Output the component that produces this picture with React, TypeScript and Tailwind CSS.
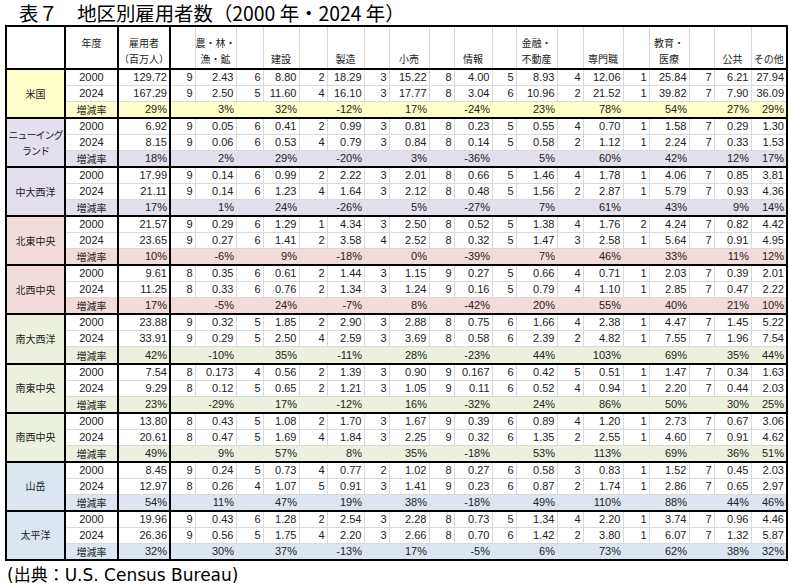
import type { ReactNode } from 'react'

interface Region {
  name: ReactNode
  bg: string
  y2000: string
  y2024: string
  growth: string
}

const regions: Region[] = [
  {
    name: '米国',
    bg: 'bg-[#ffffcc]',
    y2000: '129.72 9 2.43 6 8.80 2 18.29 3 15.22 8 4.00 5 8.93 4 12.06 1 25.84 7 6.21 27.94',
    y2024: '167.29 9 2.50 5 11.60 4 16.10 3 17.77 8 3.04 6 10.96 2 21.52 1 39.82 7 7.90 36.09',
    growth: '29% 3% 32% -12% 17% -24% 23% 78% 54% 27% 29%',
  },
  {
    name: (
      <span className="tracking-[-1px]">
        ニューイング
        <br />
        ランド
      </span>
    ),
    bg: 'bg-[#e4dfec]',
    y2000: '6.92 9 0.05 6 0.41 2 0.99 3 0.81 8 0.23 5 0.55 4 0.70 1 1.58 7 0.29 1.30',
    y2024: '8.15 9 0.06 6 0.53 4 0.79 3 0.84 8 0.14 5 0.58 2 1.12 1 2.24 7 0.33 1.53',
    growth: '18% 2% 29% -20% 3% -36% 5% 60% 42% 12% 17%',
  },
  {
    name: '中大西洋',
    bg: 'bg-[#e4dfec]',
    y2000: '17.99 9 0.14 6 0.99 2 2.22 3 2.01 8 0.66 5 1.46 4 1.78 1 4.06 7 0.85 3.81',
    y2024: '21.11 9 0.14 6 1.23 4 1.64 3 2.12 8 0.48 5 1.56 2 2.87 1 5.79 7 0.93 4.36',
    growth: '17% 1% 24% -26% 5% -27% 7% 61% 43% 9% 14%',
  },
  {
    name: '北東中央',
    bg: 'bg-[#f2dcdb]',
    y2000: '21.57 9 0.29 6 1.29 1 4.34 3 2.50 8 0.52 5 1.38 4 1.76 2 4.24 7 0.82 4.42',
    y2024: '23.65 9 0.27 6 1.41 2 3.58 4 2.52 8 0.32 5 1.47 3 2.58 1 5.64 7 0.91 4.95',
    growth: '10% -6% 9% -18% 0% -39% 7% 46% 33% 11% 12%',
  },
  {
    name: '北西中央',
    bg: 'bg-[#f2dcdb]',
    y2000: '9.61 8 0.35 6 0.61 2 1.44 3 1.15 9 0.27 5 0.66 4 0.71 1 2.03 7 0.39 2.01',
    y2024: '11.25 8 0.33 6 0.76 2 1.34 3 1.24 9 0.16 5 0.79 4 1.10 1 2.85 7 0.47 2.22',
    growth: '17% -5% 24% -7% 8% -42% 20% 55% 40% 21% 10%',
  },
  {
    name: '南大西洋',
    bg: 'bg-[#ebf1de]',
    y2000: '23.88 9 0.32 5 1.85 2 2.90 3 2.88 8 0.75 6 1.66 4 2.38 1 4.47 7 1.45 5.22',
    y2024: '33.91 9 0.29 5 2.50 4 2.59 3 3.69 8 0.58 6 2.39 2 4.82 1 7.55 7 1.96 7.54',
    growth: '42% -10% 35% -11% 28% -23% 44% 103% 69% 35% 44%',
  },
  {
    name: '南東中央',
    bg: 'bg-[#ebf1de]',
    y2000: '7.54 8 0.173 4 0.56 2 1.39 3 0.90 9 0.167 6 0.42 5 0.51 1 1.47 7 0.34 1.63',
    y2024: '9.29 8 0.12 5 0.65 2 1.21 3 1.05 9 0.11 6 0.52 4 0.94 1 2.20 7 0.44 2.03',
    growth: '23% -29% 17% -12% 16% -32% 24% 86% 50% 30% 25%',
  },
  {
    name: '南西中央',
    bg: 'bg-[#ebf1de]',
    y2000: '13.80 8 0.43 5 1.08 2 1.70 3 1.67 9 0.39 6 0.89 4 1.20 1 2.73 7 0.67 3.06',
    y2024: '20.61 8 0.47 5 1.69 4 1.84 3 2.25 9 0.32 6 1.35 2 2.55 1 4.60 7 0.91 4.62',
    growth: '49% 9% 57% 8% 35% -18% 53% 113% 69% 36% 51%',
  },
  {
    name: '山岳',
    bg: 'bg-[#dce6f1]',
    y2000: '8.45 9 0.24 5 0.73 4 0.77 2 1.02 8 0.27 6 0.58 3 0.83 1 1.52 7 0.45 2.03',
    y2024: '12.97 8 0.26 4 1.07 5 0.91 3 1.41 9 0.23 6 0.87 2 1.74 1 2.86 7 0.65 2.97',
    growth: '54% 11% 47% 19% 38% -18% 49% 110% 88% 44% 46%',
  },
  {
    name: '太平洋',
    bg: 'bg-[#dce6f1]',
    y2000: '19.96 9 0.43 6 1.28 2 2.54 3 2.28 8 0.73 5 1.34 4 2.20 1 3.74 7 0.96 4.46',
    y2024: '26.36 9 0.56 5 1.75 4 2.20 3 2.66 8 0.70 6 1.42 2 3.80 1 6.07 7 1.32 5.87',
    growth: '32% 30% 37% -13% 17% -5% 6% 73% 62% 38% 32%',
  },
]

const sectors: ReactNode[] = [
  <>農・林・<br />漁・鉱</>,
  '建設',
  '製造',
  '小売',
  '情報',
  <>金融・<br />不動産</>,
  '専門職',
  <>教育・<br />医療</>,
  '公共',
]

// rank / value column pairs, px
const pairWidths = [
  [25, 41],
  [27, 36],
  [28, 37],
  [25, 40],
  [25, 38],
  [24, 41],
  [26, 40],
  [26, 40],
  [25, 37],
]

const jp = "font-['Noto_Sans_CJK_JP',sans-serif] text-[10px]"
const num = "font-['Liberation_Sans_Narrow','Liberation_Sans',sans-serif] text-[11px]"
const thin = 'border-[#d9d9d9]'
const head = `${jp} font-normal align-bottom leading-[16px] whitespace-nowrap border-b-2 border-b-black`

function RowCells({ label, values }: { label: string; values: string }) {
  const v = values.split(' ')
  return (
    <>
      <td className={`${num} bg-white text-center border-r-2 border-r-black border-b ${thin} leading-[15px]`}>{label}</td>
      <td className={`${num} bg-white text-right pr-[2px] border-r-2 border-r-black border-b ${thin} leading-[15px]`}>{v[0]}</td>
      {v.slice(1).map((x, i) => (
        <td
          key={i}
          className={`${num} bg-white text-right pr-[2px] border-b ${thin} leading-[15px] ${
            i === v.length - 2 ? 'border-r-2 border-r-black' : `border-r ${thin}`
          }`}
        >
          {x}
        </td>
      ))}
    </>
  )
}

function GrowthRow({ bg, values }: { bg: string; values: string }) {
  const g = values.split(' ')
  return (
    <tr className={`h-[16.6px] ${bg}`}>
      <td className={`${jp} text-center border-r-2 border-r-black border-b-2 border-b-black leading-[15px]`}>増減率</td>
      <td className={`${num} text-right pr-[2px] border-r-2 border-r-black border-b-2 border-b-black leading-[15px]`}>{g[0]}</td>
      {g.slice(1, 10).map((x, i) => (
        <td key={i} colSpan={2} className={`${num} text-right pr-[2px] border-b-2 border-b-black leading-[15px]`}>
          {x}
        </td>
      ))}
      <td className={`${num} text-right pr-[2px] border-r-2 border-r-black border-b-2 border-b-black leading-[15px]`}>{g[10]}</td>
    </tr>
  )
}

export default function App() {
  return (
    <div className="w-[789px] min-h-[587px] bg-white text-[#222]">
      <h1 className="pl-[19px] font-['Noto_Sans_CJK_JP',sans-serif] text-[19.4px] font-normal leading-[25px] text-black whitespace-nowrap">
        表７　地区別雇用者数（2000 年・2024 年）
      </h1>
      <div className="pl-[5px]">
        <table className="table-fixed border-collapse w-[781px] border-2 border-black">
          <colgroup>
            <col className="w-[59px]" />
            <col className="w-[53px]" />
            <col className="w-[52px]" />
            {pairWidths.map(([r, v], i) => [
              <col key={`r${i}`} style={{ width: r }} />,
              <col key={`v${i}`} style={{ width: v }} />,
            ])}
            <col className="w-[36px]" />
          </colgroup>
          <thead>
            <tr className="h-[43px]">
              <th className="border-r-2 border-r-black border-b-2 border-b-black" />
              <th className={`${head} border-r-2 border-r-black pb-px`}>
                年度
                <br />
                &nbsp;
              </th>
              <th className={`${head} border-r-2 border-r-black pb-px`}>
                雇用者
                <br />
                （百万人）
              </th>
              {sectors.map((s, i) => [
                <th key={`r${i}`} className={`border-r ${thin} border-b-2 border-b-black`} />,
                <th key={`v${i}`} className={`${head} border-r ${thin} pb-px`}>
                  {s}
                </th>,
              ])}
              <th className={`${head} border-r-2 border-r-black pb-px`}>その他</th>
            </tr>
          </thead>
          <tbody>
            {regions.map((r, i) => [
              <tr key={`a${i}`} className="h-[16px]">
                <td
                  rowSpan={3}
                  className={`${jp} ${r.bg} text-center align-middle whitespace-nowrap leading-[16px] border-r-2 border-r-black border-b-2 border-b-black`}
                >
                  {r.name}
                </td>
                <RowCells label="2000" values={r.y2000} />
              </tr>,
              <tr key={`b${i}`} className="h-[16px]">
                <RowCells label="2024" values={r.y2024} />
              </tr>,
              <GrowthRow key={`c${i}`} bg={r.bg} values={r.growth} />,
            ])}
          </tbody>
        </table>
      </div>
      <p className="pl-[7px] pt-[4px] font-['DejaVu_Sans','Noto_Sans_CJK_JP',sans-serif] text-[17px] leading-[20px] text-black whitespace-nowrap">
        (出典：U.S. Census Bureau)
      </p>
    </div>
  )
}
